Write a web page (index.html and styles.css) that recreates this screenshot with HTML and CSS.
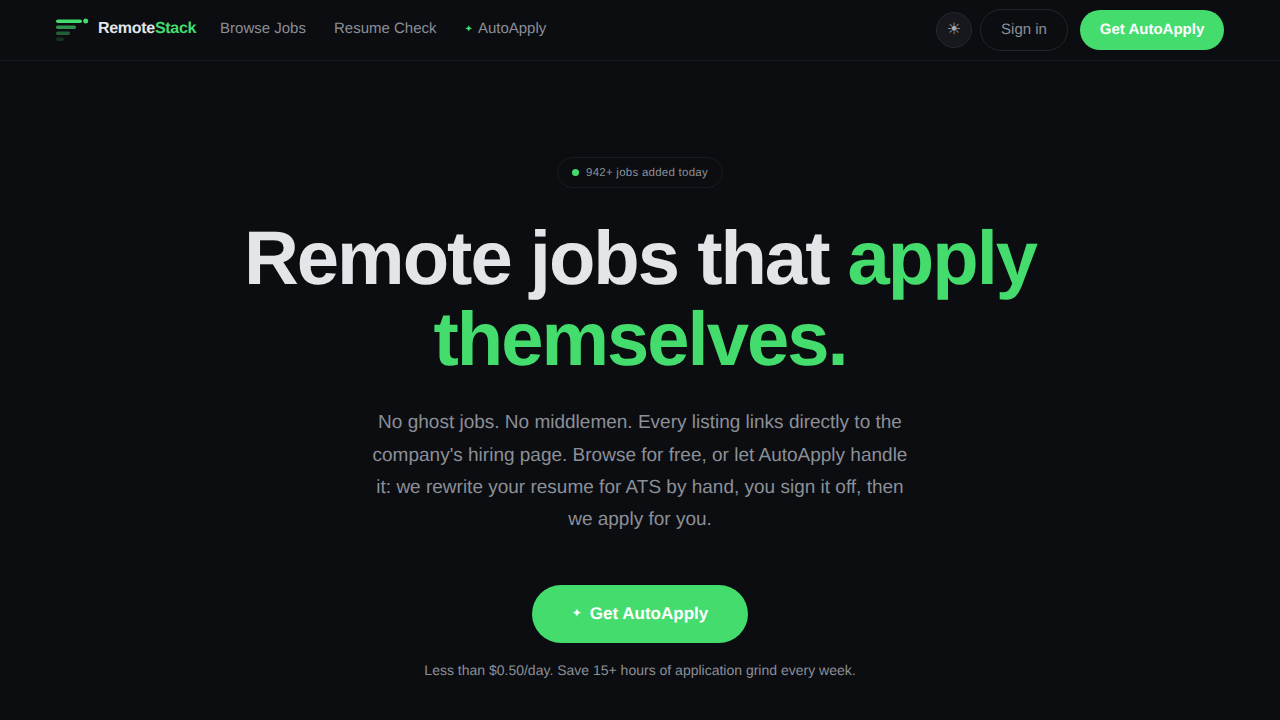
FILE: index.html
```html
<!DOCTYPE html>
<html lang="en">

<head>
    <meta charset="UTF-8">
    <meta name="viewport" content="width=device-width, initial-scale=1.0">
    <title>RemoteStack</title>
    <link rel="stylesheet" href="styles.css">
</head>

<body>
    <header class="navbar">
        <div class="nav-left">
            <a class="logo" href="#">
                <svg class="logo-mark" width="32" height="22" viewBox="0 0 32 22" aria-hidden="true">
                    <rect x="0" y="0.5" width="26" height="3.5" rx="1.75" fill="#45dc6e"></rect>
                    <circle cx="29.7" cy="2" r="2.5" fill="#45dc6e"></circle>
                    <rect x="0" y="6.5" width="20" height="3.5" rx="1.75" fill="#45dc6e" opacity="0.65"></rect>
                    <rect x="0" y="12.5" width="14" height="3.5" rx="1.75" fill="#45dc6e" opacity="0.4"></rect>
                    <rect x="0" y="18.5" width="8" height="3.5" rx="1.75" fill="#45dc6e" opacity="0.18"></rect>
                </svg>
                <span class="logo-text">Remote<span class="green">Stack</span></span>
            </a>
            <nav class="nav-links">
                <a href="#">Browse Jobs</a>
                <a href="#">Resume Check</a>
                <a href="#"><span class="nav-spark">✦</span>AutoApply</a>
            </nav>
        </div>
        <div class="nav-right">
            <button class="theme-btn" type="button">☀</button>
            <a class="signin-btn" href="#">Sign in</a>
            <a class="cta-small" href="#">Get AutoApply</a>
        </div>
    </header>

    <main class="hero">
        <div class="badge"><span class="badge-dot"></span>942+ jobs added today</div>
        <h1>
            <span class="title-line">Remote jobs that <span class="green">apply</span></span>
            <span class="title-line green">themselves.</span>
        </h1>
        <p class="lead">No ghost jobs. No middlemen. Every listing links directly to the company's hiring page. Browse for free, or let AutoApply handle it: we rewrite your resume for ATS by hand, you sign it off, then we apply for you.</p>
        <a class="cta-big" href="#"><span class="cta-spark">✦</span>Get AutoApply</a>
        <p class="note">Less than $0.50/day. Save 15+ hours of application grind every week.</p>
    </main>
</body>

</html>
```

FILE: styles.css
```css
* {
    box-sizing: border-box;
}

body {
    font-family: 'Liberation Sans', Arial, sans-serif;
    background-color: #0b0d10;
    color: #e3e5e9;
    margin: 0;
    min-height: 100vh;
    overflow: hidden;
    text-rendering: geometricPrecision;
}

a {
    text-decoration: none;
    color: inherit;
}

.green {
    color: #45dc6e;
}

.navbar {
    height: 61px;
    padding: 0 56px;
    display: flex;
    justify-content: space-between;
    align-items: center;
    border-bottom: 1px solid #15181c;
}

.nav-left,
.nav-right,
.logo,
.nav-links {
    display: flex;
    align-items: center;
}

.logo {
    gap: 10px;
    margin-right: 24px;
}

.logo-mark {
    overflow: visible;
}

.logo-text {
    font-size: 16px;
    font-weight: 700;
    letter-spacing: -0.3px;
    color: #e3e5e9;
    margin-bottom: 3px;
}

.nav-links {
    gap: 28px;
    font-size: 15px;
    color: #8b8f98;
    margin-bottom: 3px;
}

.nav-spark {
    font-size: 10px;
    color: #45dc6e;
    margin-right: 5px;
    vertical-align: 1px;
    font-family: 'DejaVu Sans', sans-serif;
}

.theme-btn {
    width: 36px;
    height: 36px;
    border-radius: 50%;
    border: 1px solid #25282e;
    background: #16181e;
    color: #a3a8b2;
    font-size: 16px;
    padding: 0 0 3px;
    margin-right: 8px;
    font-family: 'DejaVu Sans', sans-serif;
}

.signin-btn {
    width: 88px;
    height: 42px;
    display: flex;
    align-items: center;
    justify-content: center;
    border: 1px solid #22252a;
    border-radius: 21px;
    padding-bottom: 2px;
    font-size: 15px;
    color: #8b8f98;
    margin-right: 12px;
}

.cta-small {
    width: 144px;
    height: 40px;
    display: flex;
    align-items: center;
    justify-content: center;
    background-color: #45dc6e;
    border-radius: 20px;
    padding-bottom: 2px;
    color: #fff;
    font-size: 15px;
    font-weight: 700;
}

.hero {
    display: flex;
    flex-direction: column;
    align-items: center;
    padding-top: 96px;
}

.badge {
    display: flex;
    align-items: center;
    gap: 7px;
    height: 31px;
    padding: 0 14.5px;
    border: 1px solid #191c20;
    border-radius: 16px;
    font-size: 11.5px;
    letter-spacing: 0.25px;
    color: #8b8f98;
}

.badge-dot {
    width: 7px;
    height: 7px;
    border-radius: 50%;
    background-color: #45dc6e;
}

h1 {
    width: 900px;
    margin: 30px 0 0;
    text-align: center;
    font-size: 76px;
    line-height: 81px;
    font-weight: 700;
    letter-spacing: -2px;
}

.title-line {
    display: block;
}

.lead {
    width: 540px;
    margin: 27.4px 0 0;
    text-align: center;
    font-size: 19px;
    line-height: 32.3px;
    color: #8b8f98;
}

.cta-big {
    display: flex;
    align-items: center;
    justify-content: center;
    width: 216px;
    height: 58px;
    margin-top: 48.6px;
    background-color: #45dc6e;
    border-radius: 29px;
    color: #fff;
    font-size: 17px;
    font-weight: 700;
}

.cta-spark {
    font-size: 12px;
    margin-right: 8px;
    margin-bottom: 3px;
    font-family: 'DejaVu Sans', sans-serif;
}

.note {
    margin: 19px 0 0;
    font-size: 14px;
    color: #8b8f98;
}
```
